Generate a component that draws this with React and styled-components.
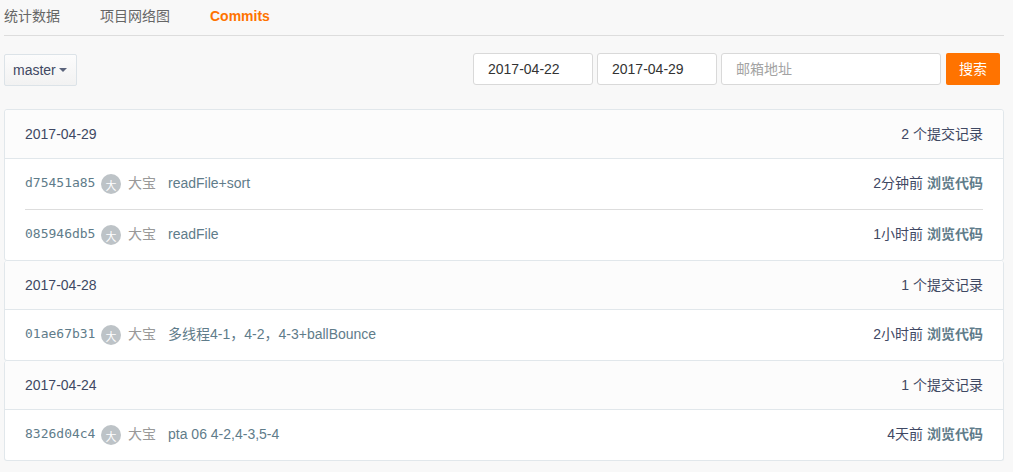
import React, { useState } from 'react'
import styled, { createGlobalStyle } from 'styled-components'

const tabs = ['统计数据', '项目网络图', 'Commits']

const groups = [
	{
		date: '2017-04-29',
		commits: [
			{ hash: 'd75451a85', message: 'readFile+sort', time: '2分钟前' },
			{ hash: '085946db5', message: 'readFile', time: '1小时前' },
		],
	},
	{
		date: '2017-04-28',
		commits: [
			{
				hash: '01ae67b31',
				message: '多线程4-1，4-2，4-3+ballBounce',
				time: '2小时前',
			},
		],
	},
	{
		date: '2017-04-24',
		commits: [
			{ hash: '8326d04c4', message: 'pta 06 4-2,4-3,5-4', time: '4天前' },
		],
	},
]

const GlobalStyle = createGlobalStyle`
	* {
		box-sizing: border-box;
	}
	body {
		margin: 0;
		background-color: #f8f8f8;
		color: #3f4863;
		font-family: 'Liberation Sans', 'Noto Sans CJK SC', sans-serif;
		font-size: 14px;
		line-height: 20px;
	}
	a {
		text-decoration: none;
	}
	button,
	input {
		font: inherit;
	}
`

const Page = styled.main`
	padding: 0 9px 11px 4px;
`

const Tabs = styled.nav`
	display: flex;
	gap: 40px;
	height: 36px;
	padding-top: 6px;
	border-bottom: 1px solid #ddd;
`

const Tab = styled.a`
	color: ${props => (props.$active ? '#ff7300' : '#666')};
	font-weight: ${props => (props.$active ? 'bold' : 'normal')};
`

const Toolbar = styled.div`
	display: flex;
	justify-content: space-between;
	align-items: flex-start;
	padding: 17px 4px 23px 0;
`

const BranchButton = styled.button`
	display: flex;
	align-items: center;
	gap: 3px;
	height: 32px;
	margin-top: 1px;
	padding: 0 9px 0 8px;
	border: 1px solid #dce3e8;
	border-radius: 2px;
	background: linear-gradient(#fcfcfc, #f2f2f2);
	color: #3f4863;
`

const Caret = styled.span`
	border: 4px solid transparent;
	border-top-color: #5b647c;
	border-bottom: 0;
`

const SearchForm = styled.form`
	display: flex;
	gap: 4px;
`

const Field = styled.input`
	width: ${props => (props.$wide ? '220px' : '120px')};
	height: 32px;
	padding: 0 14px;
	border: 1px solid #d9d9d9;
	border-radius: 3px;
	background-color: #fff;
	color: #333;
	&::placeholder {
		color: #a3a3a3;
		opacity: 1;
	}
`

const SearchButton = styled.button`
	height: 32px;
	margin-left: 1px;
	padding: 0 13px;
	border: 0;
	border-radius: 2px;
	background-color: #ff7300;
	color: #fff;
`

const Group = styled.section`
	border: 1px solid #e1e7eb;
	border-radius: 3px;
	background-color: #fff;
	& + & {
		border-top: 0;
	}
`

const GroupHeader = styled.header`
	display: flex;
	justify-content: space-between;
	align-items: center;
	height: 49px;
	padding: 0 20px;
	border-bottom: 1px solid #e1e7eb;
	border-radius: 3px 3px 0 0;
	background-color: #fcfcfc;
`

const GroupDate = styled.h2`
	margin: 0;
	font-size: 14px;
	font-weight: normal;
`

const CommitList = styled.ul`
	margin: 0;
	padding: 0 20px;
	list-style: none;
`

const Commit = styled.li`
	display: flex;
	align-items: center;
	height: 50px;
	padding-bottom: 2px;
	& + & {
		height: 51px;
		border-top: 1px solid #ddd;
	}
`

const Hash = styled.a`
	width: 76px;
	color: #5f7c8a;
	font-family: 'DejaVu Sans Mono', monospace;
	font-size: 13px;
`

const Avatar = styled.span`
	width: 20px;
	height: 20px;
	margin: 2px 7px 0 0;
	padding-top: 2px;
	border-radius: 50%;
	background-color: #bdc3c7;
	color: #fff;
	font-size: 11px;
	text-align: center;
`

const Author = styled.a`
	margin-right: 12px;
	color: #999;
`

const Message = styled.a`
	flex: 1;
	color: #5f7c8a;
`

const Browse = styled.a`
	margin-left: 4px;
	color: #5f7c8a;
	font-weight: bold;
`

const CommitRow = ({ hash, message, time }) => (
	<Commit>
		<Hash href="#">{hash}</Hash>
		<Avatar>大</Avatar>
		<Author href="#">大宝</Author>
		<Message href="#">{message}</Message>
		<time>{time}</time>
		<Browse href="#">浏览代码</Browse>
	</Commit>
)

const Search = () => {
	const [from, setFrom] = useState('2017-04-22')
	const [to, setTo] = useState('2017-04-29')
	const [email, setEmail] = useState('')

	return (
		<SearchForm onSubmit={e => e.preventDefault()}>
			<Field
				aria-label="开始日期"
				value={from}
				onChange={e => setFrom(e.target.value)}
			/>
			<Field
				aria-label="结束日期"
				value={to}
				onChange={e => setTo(e.target.value)}
			/>
			<Field
				$wide
				type="email"
				aria-label="邮箱地址"
				placeholder="邮箱地址"
				value={email}
				onChange={e => setEmail(e.target.value)}
			/>
			<SearchButton type="submit">搜索</SearchButton>
		</SearchForm>
	)
}

const App = () => (
	<Page>
		<GlobalStyle />
		<Tabs>
			{tabs.map(tab => (
				<Tab key={tab} href="#" $active={tab === 'Commits'}>
					{tab}
				</Tab>
			))}
		</Tabs>
		<Toolbar>
			<BranchButton type="button">
				master
				<Caret />
			</BranchButton>
			<Search />
		</Toolbar>
		{groups.map(group => (
			<Group key={group.date}>
				<GroupHeader>
					<GroupDate>{group.date}</GroupDate>
					<span>{group.commits.length} 个提交记录</span>
				</GroupHeader>
				<CommitList>
					{group.commits.map(commit => (
						<CommitRow key={commit.hash} {...commit} />
					))}
				</CommitList>
			</Group>
		))}
	</Page>
)

export default App
